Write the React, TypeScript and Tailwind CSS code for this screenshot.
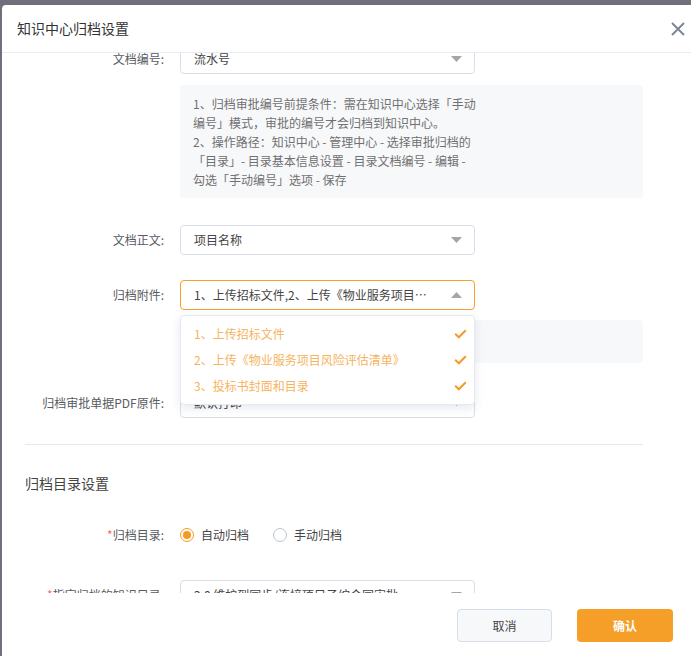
import * as React from 'react';

const font = { fontFamily: '"Noto Sans CJK SC", "Noto Sans", sans-serif' };

function Caret({ up = false }: { up?: boolean }): React.ReactElement {
  return (
    <svg width="11" height="6" viewBox="0 0 11 6" className="shrink-0">
      {up ? <path d="M0 6 L5.5 0 L11 6 Z" fill="#a6a6a6" /> : <path d="M0 0 L11 0 L5.5 6 Z" fill="#a6a6a6" />}
    </svg>
  );
}

function Check(): React.ReactElement {
  return (
    <svg width="13" height="10" viewBox="0 0 13 10" className="shrink-0">
      <path d="M1.2 4.8 L4.8 8.3 L11.8 1.3" fill="none" stroke="#f59a23" strokeWidth="2" />
    </svg>
  );
}

function Label({ text, required = false }: { text: string; required?: boolean }): React.ReactElement {
  return (
    <div className="w-[139px] mr-[16px] shrink-0 text-right text-[12px] text-[#585b61] whitespace-nowrap">
      {required && <span className="text-[#f56c6c]">*</span>}
      {text}
    </div>
  );
}

function Select({ value, open = false }: { value: string; open?: boolean }): React.ReactElement {
  return (
    <div
      className={`w-[295px] h-[30px] flex items-center justify-between pl-[13px] pr-[12px] rounded-[4px] border bg-white ${
        open ? 'border-[#f5a02a]' : 'border-[#d8dfe8]'
      }`}
    >
      <span className="min-w-0 mr-[16px] text-[12px] text-[#444] truncate">{value}</span>
      <Caret up={open} />
    </div>
  );
}

const attachments = ['1、上传招标文件', '2、上传《物业服务项目风险评估清单》', '3、投标书封面和目录'];

export default function App(): React.ReactElement {
  return (
    <div className="h-[656px] bg-[#70707c] pt-[5px] pl-[2px] overflow-hidden" style={font}>
      <div className="h-full bg-white rounded-tl-[4px] flex flex-col">
        <div className="h-[48px] shrink-0 flex items-center justify-between pl-[15px] pr-[6px] border-b border-[#e9eef4]">
          <span className="text-[14px] text-[#333]">知识中心归档设置</span>
          <svg width="14" height="14" viewBox="0 0 14 14">
            <path d="M1 1 L13 13 M13 1 L1 13" stroke="#7b8794" strokeWidth="2" />
          </svg>
        </div>

        <div className="flex-1 overflow-hidden">
          <div className="-mt-[9px] pl-[23px] pr-[48px]">
            <div className="flex items-center h-[30px]">
              <Label text="文档编号:" />
              <Select value="流水号" />
            </div>

            <div className="mt-[11px] ml-[155px] bg-[#f7f8fa] rounded-[4px] px-[13px] py-[9px] text-[12px] leading-[19px] text-[#707070]">
              <div>1、归档审批编号前提条件：需在知识中心选择「手动</div>
              <div>编号」模式，审批的编号才会归档到知识中心。</div>
              <div>2、操作路径：知识中心 - 管理中心 - 选择审批归档的</div>
              <div>「目录」- 目录基本信息设置 - 目录文档编号 - 编辑 -</div>
              <div>勾选「手动编号」选项 - 保存</div>
            </div>

            <div className="mt-[27px] flex items-center h-[30px]">
              <Label text="文档正文:" />
              <Select value="项目名称" />
            </div>

            <div className="mt-[25px] flex items-center h-[30px]">
              <Label text="归档附件:" />
              <div className="relative">
                <Select value="1、上传招标文件,2、上传《物业服务项目风险评估清单》" open />
                <div className="absolute z-10 left-0 top-[35px] w-[295px] py-[5px] bg-white rounded-[4px] border border-[#e6ebf1] shadow-[0_3px_10px_rgba(60,80,120,0.13)]">
                  {attachments.map(item => (
                    <div key={item} className="h-[26px] flex items-center justify-between pl-[13px] pr-[7px]">
                      <span className="text-[12px] text-[#f7b35e]">{item}</span>
                      <Check />
                    </div>
                  ))}
                </div>
              </div>
            </div>

            <div className="mt-[10px] ml-[155px] h-[43px] bg-[#f7f8fa] rounded-[4px] px-[13px] flex items-center text-[12px] text-[#707070]">
              <span>附件将随审批一并归档</span>
            </div>

            <div className="mt-[25px] flex items-center h-[30px]">
              <Label text="归档审批单据PDF原件:" />
              <Select value="默认打印" />
            </div>

            <div className="mt-[26px] h-px bg-[#e3e9ef]" />

            <div className="mt-[28px] text-[14px] leading-[20px] text-[#444]">归档目录设置</div>

            <div className="mt-[27px] flex items-center h-[30px]">
              <Label text="归档目录:" required />
              <div className="flex items-center gap-[7px]">
                <span className="w-[14px] h-[14px] rounded-full border border-[#f59a23] flex items-center justify-center">
                  <span className="w-[8px] h-[8px] rounded-full bg-[#f59a23]" />
                </span>
                <span className="text-[12px] text-[#444]">自动归档</span>
              </div>
              <div className="flex items-center gap-[7px] ml-[24px]">
                <span className="w-[14px] h-[14px] rounded-full border border-[#b9c4d2] bg-white" />
                <span className="text-[12px] text-[#444]">手动归档</span>
              </div>
            </div>

            <div className="mt-[30px] flex items-center h-[30px]">
              <Label text="指定归档的知识目录:" required />
              <Select value="2.0 维护到同步/连接项目子综合同审批" />
            </div>
          </div>
        </div>

        <div className="h-[63px] shrink-0 flex items-start justify-end gap-[25px] pt-[16px] pr-[18px]">
          <button className="w-[95px] h-[33px] rounded-[4px] border border-[#d6dee7] bg-[#f7f8fa] text-[12px] text-[#444]">
            取消
          </button>
          <button className="w-[96px] h-[33px] rounded-[4px] bg-[#f59e28] text-[12px] text-white font-bold">
            确认
          </button>
        </div>
      </div>
    </div>
  );
}
